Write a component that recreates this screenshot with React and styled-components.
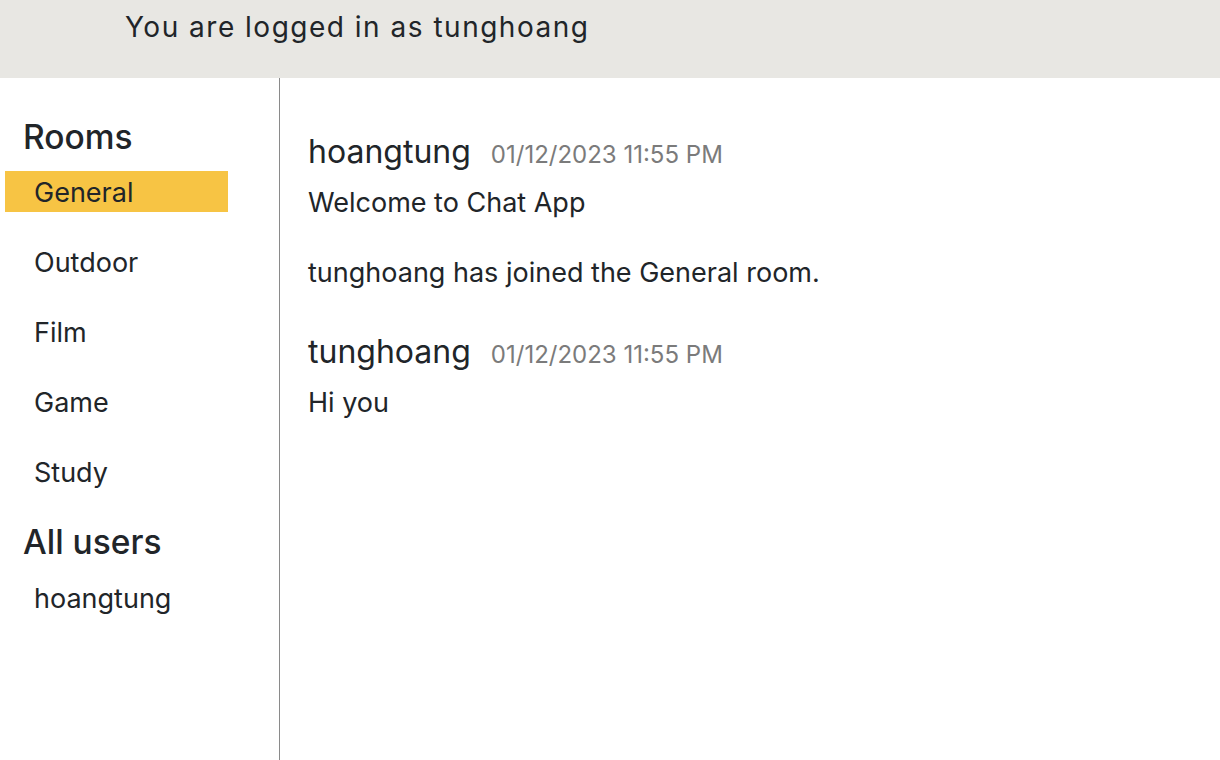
import styled, { createGlobalStyle } from 'styled-components';

const GlobalStyle = createGlobalStyle`
  html, body {
    margin: 0;
    padding: 0;
    background: #fff;
    font-family: Inter, "Liberation Sans", sans-serif;
    color: #212529;
  }
`;

const Page = styled.div`
  width: 100vw;
  height: 100vh;
  display: flex;
  flex-direction: column;
  overflow: hidden;
`;

const TopBar = styled.div`
  height: 78px;
  flex-shrink: 0;
  background: #e8e7e3;
  padding-left: 125px;
  box-sizing: border-box;
  p {
    margin: 0;
    padding-top: 10px;
    font-size: 28px;
    line-height: 34px;
    letter-spacing: 1.5px;
    color: #212529;
  }
`;

const Body = styled.div`
  flex-grow: 1;
  display: flex;
`;

const Sidebar = styled.div`
  width: 280px;
  flex-shrink: 0;
  border-right: 1px solid #8a8a8a;
  padding-top: 39px;
  box-sizing: border-box;
`;

const Heading = styled.h2`
  margin: 0 0 0 23px;
  font-size: 33.5px;
  font-weight: 500;
  line-height: 40px;
`;

const List = styled.ul`
  list-style: none;
  margin: ${(p) => p.$top || 0}px 0 0 5px;
  padding: 0;
  width: 223px;
`;

const Item = styled.li`
  height: 41px;
  margin-bottom: 29px;
  padding-left: 29px;
  font-size: 27px;
  line-height: 43px;
  background: ${(p) => (p.$active ? '#f7c444' : 'transparent')};
  &:last-child {
    margin-bottom: 30px;
  }
`;

const UserItem = styled.li`
  padding-left: 29px;
  font-size: 27px;
  line-height: 41px;
`;

const Chat = styled.div`
  flex-grow: 1;
  padding: 53px 0 0 28px;
`;

const MsgHead = styled.div`
  display: flex;
  align-items: baseline;
  gap: 20px;
  height: 42px;
`;

const Name = styled.span`
  font-size: 32px;
  line-height: 42px;
`;

const Time = styled.span`
  font-size: 24px;
  color: #7b7b7b;
`;

const Text = styled.p`
  margin: 14px 0 0;
  font-size: 27px;
  line-height: 32px;
`;

const Notice = styled.p`
  margin: 38px 0 42px;
  font-size: 27px;
  line-height: 32px;
`;

const rooms = ['General', 'Outdoor', 'Film', 'Game', 'Study'];

const App = () => {
  return (
    <>
      <GlobalStyle />
      <Page>
        <TopBar>
          <p>You are logged in as tunghoang</p>
        </TopBar>
        <Body>
          <Sidebar>
            <Heading>Rooms</Heading>
            <List $top={14}>
              {rooms.map((r) => (
                <Item key={r} $active={r === 'General'}>
                  {r}
                </Item>
              ))}
            </List>
            <Heading>All users</Heading>
            <List $top={16}>
              <UserItem>hoangtung</UserItem>
            </List>
          </Sidebar>
          <Chat>
            <MsgHead>
              <Name>hoangtung</Name>
              <Time>01/12/2023 11:55 PM</Time>
            </MsgHead>
            <Text>Welcome to Chat App</Text>
            <Notice>tunghoang has joined the General room.</Notice>
            <MsgHead>
              <Name>tunghoang</Name>
              <Time>01/12/2023 11:55 PM</Time>
            </MsgHead>
            <Text>Hi you</Text>
          </Chat>
        </Body>
      </Page>
    </>
  );
};
export default App;
